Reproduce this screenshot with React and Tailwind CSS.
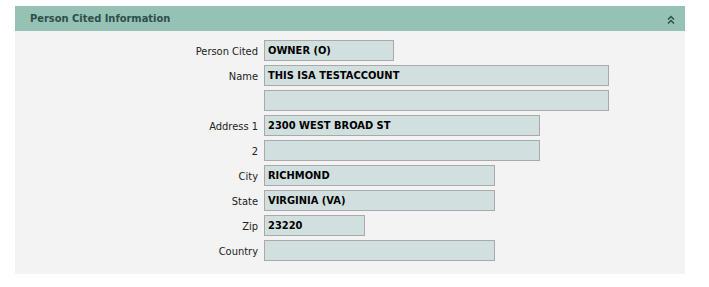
import React from "react";

const rows = [
  { label: "Person Cited", value: "OWNER (O)", w: "w-[130px]" },
  { label: "Name", value: "THIS ISA TESTACCOUNT", w: "w-[345px]" },
  { label: "", value: "", w: "w-[345px]" },
  { label: "Address 1", value: "2300 WEST BROAD ST", w: "w-[276px]" },
  { label: "2", value: "", w: "w-[276px]" },
  { label: "City", value: "RICHMOND", w: "w-[231px]" },
  { label: "State", value: "VIRGINIA (VA)", w: "w-[231px]" },
  { label: "Zip", value: "23220", w: "w-[101px]" },
  { label: "Country", value: "", w: "w-[231px]" },
];

const App = () => {
  return (
    <div className="bg-white w-[709px] h-[287px] pt-[6px] pl-[15px] font-['DejaVu_Sans_Condensed','DejaVu_Sans',sans-serif]">
      <div className="w-[670px]">
        <div className="h-[25px] bg-[#96c1b5] flex items-center justify-between pl-[15px] pr-[10px] pt-[2px]">
          <span className="text-[11px] font-bold text-[#2d4f4a]">Person Cited Information</span>
          <svg width="8" height="10" viewBox="0 0 8 10" className="text-[#2d4f4a]">
            <path d="M1 4.5 L4 1.5 L7 4.5 M1 8.5 L4 5.5 L7 8.5" fill="none" stroke="currentColor" strokeWidth="1.5" />
          </svg>
        </div>
        <div className="bg-[#f3f3f3] pt-[9px] pb-[13px] flex flex-col gap-[4px]">
          {rows.map((r, i) => (
            <div key={i} className="flex items-center h-[21px]">
              <label className="w-[249px] pr-[6px] pt-[1px] text-right text-[11px] leading-[21px] text-[#222]">{r.label}</label>
              <div className={`${r.w} h-[21px] border border-[#a9a9a9] bg-[#d1dfde] px-[3px] pt-[1px] flex items-center text-[11px] font-bold text-black`}>
                {r.value}
              </div>
            </div>
          ))}
        </div>
      </div>
    </div>
  );
};

export default App;
